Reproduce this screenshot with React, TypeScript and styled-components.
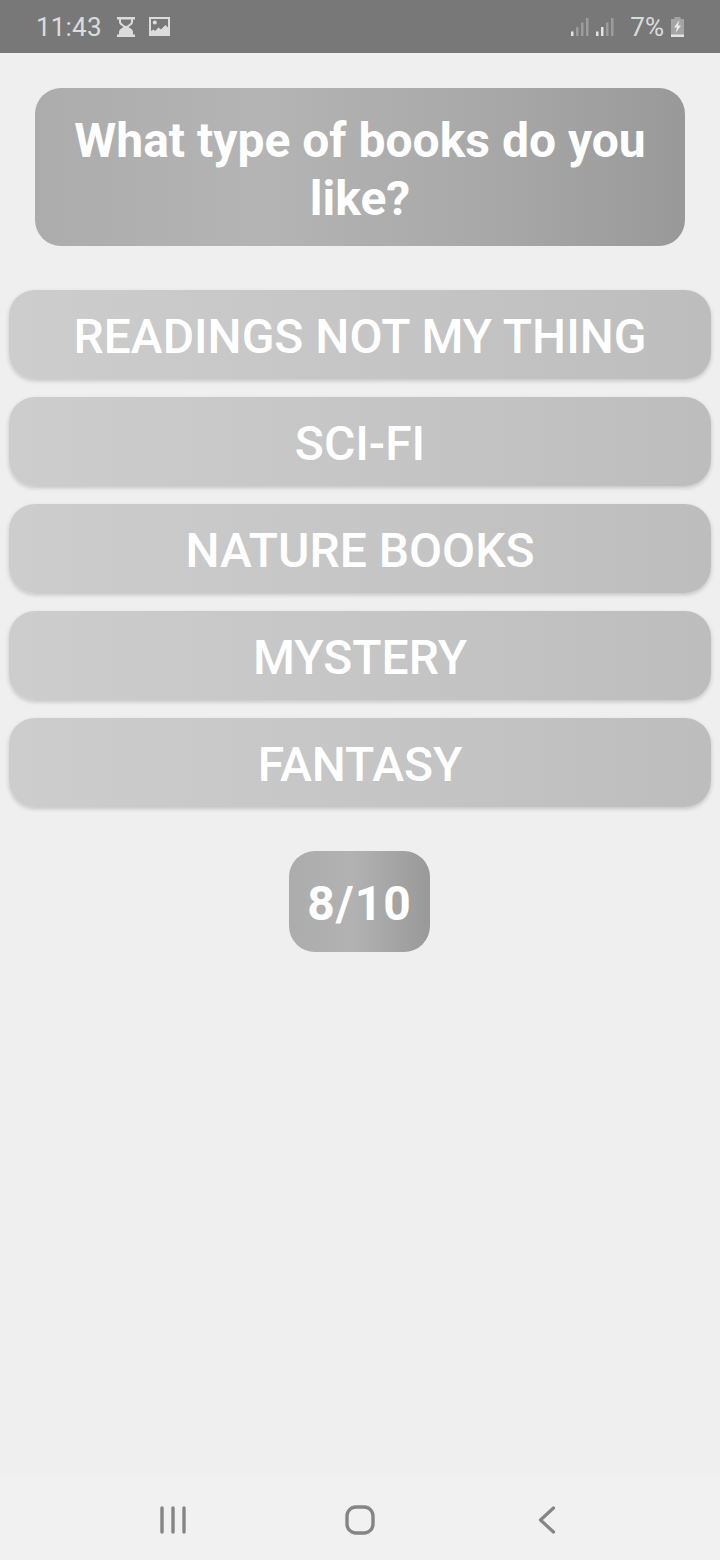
import React from 'react';
import styled, { createGlobalStyle } from 'styled-components';

const GlobalStyle = createGlobalStyle`
  html, body {
    margin: 0;
    padding: 0;
    background: #efefef;
  }
  * {
    box-sizing: border-box;
  }
`;

const Screen = styled.div`
  width: 720px;
  height: 1560px;
  display: flex;
  flex-direction: column;
  background: #efefef;
  font-family: Roboto, sans-serif;
  overflow: hidden;
`;

const StatusBar = styled.div`
  height: 53px;
  flex: none;
  background: #787878;
  color: #dcdcdc;
  display: flex;
  align-items: center;
  justify-content: space-between;
  padding: 0 35px 0 36px;
`;

const StatusGroup = styled.div`
  display: flex;
  align-items: center;
`;

const Clock = styled.span`
  font-size: 26px;
  letter-spacing: 0.2px;
  margin-right: 15px;
`;

const Percent = styled.span`
  font-size: 26px;
  margin: 0 6px 0 16px;
`;

const Icon = styled.svg<{ $gap?: number }>`
  display: block;
  flex: none;
  margin-right: ${(props) => props.$gap ?? 0}px;
`;

const Content = styled.main`
  flex: 1;
  display: flex;
  flex-direction: column;
  align-items: center;
  padding-top: 35px;
`;

const Question = styled.h1`
  width: 650px;
  height: 158px;
  margin: 0 0 44px;
  padding: 5px 30px 0;
  display: flex;
  align-items: center;
  justify-content: center;
  text-align: center;
  border-radius: 26px;
  background: linear-gradient(90deg, #acacac 0%, #b4b4b4 35%, #a8a8a8 70%, #999999 100%);
  color: #ffffff;
  font-size: 48px;
  font-weight: 700;
  line-height: 58px;
`;

const Options = styled.div`
  width: 702px;
  display: flex;
  flex-direction: column;
  gap: 18px;
`;

const Option = styled.button`
  height: 89px;
  padding: 4px 0 0;
  border: none;
  border-radius: 26px;
  background: linear-gradient(90deg, #cdcdcd 0%, #c4c4c4 60%, #bdbdbd 100%);
  box-shadow: 0 2px 4px rgba(0, 0, 0, 0.18);
  color: #ffffff;
  font-family: inherit;
  font-size: 48px;
  font-weight: 500;
  line-height: 85px;
  text-align: center;
`;

const Counter = styled.div`
  width: 141px;
  height: 101px;
  margin: 44px 1px 0 0;
  padding-top: 4px;
  display: flex;
  align-items: center;
  justify-content: center;
  border-radius: 26px;
  background: linear-gradient(90deg, #acacac 0%, #b2b2b2 45%, #999999 100%);
  color: #ffffff;
  font-size: 48px;
  font-weight: 700;
  letter-spacing: 1px;
`;

const NavBar = styled.nav`
  height: 83px;
  flex: none;
  background: #f1f1f1;
  display: flex;
  align-items: center;
  justify-content: center;
  color: #858585;
`;

const NavSlot = styled.div`
  width: 187px;
  display: flex;
  justify-content: center;
  padding-top: 3px;
`;

const options = ['READINGS NOT MY THING', 'SCI-FI', 'NATURE BOOKS', 'MYSTERY', 'FANTASY'];

const Hourglass = () => (
  <Icon $gap={14} width="18" height="20" viewBox="0 0 18 20">
    <path d="M0 0h18v2.500h-2v2.500c0 2-2 3.500-4.500 5 2.500 1.500 4.500 3 4.500 5v2.500h2V20H0v-2.500h2V15c0-2 2-3.500 4.500-5C4 8.500 2 7 2 5V2.500H0z" fill="#dcdcdc" />
    <path d="M4 2.500h10V5c0 1.200-2.500 3-5 4.300C6.500 8 4 6.200 4 5z" fill="#787878" />
  </Icon>
);

const Picture = () => (
  <Icon width="21" height="19" viewBox="0 0 21 19">
    <path d="M0 0h21v19H0z" fill="#dcdcdc" />
    <path d="M2 2h17v8.500l-2.500-2.500-4.500 4.500-2.500-2-3.500 3.500-1.500-1.500L2 14z" fill="#787878" />
    <circle cx="5.800" cy="5.500" r="2" fill="#dcdcdc" />
  </Icon>
);

const Signal = ({ strong, gap }: { strong: number; gap: number }) => (
  <Icon $gap={gap} width="18" height="22" viewBox="0 0 18 22">
    {[0, 1, 2, 3].map((i) => (
      <rect
        key={i}
        x={i * 5}
        y={20 - (i + 1) * 4.500}
        width="2.500"
        height={(i + 1) * 4.500}
        fill={i < strong ? '#e4e4e4' : '#9c9c9c'}
      />
    ))}
  </Icon>
);

const Battery = () => (
  <Icon width="15" height="22" viewBox="0 0 15 22">
    <path d="M4.500 1h6v2h3.500v18H1V3h3.500z" fill="#a4a4a4" />
    <path d="M1 18.500h13V21H1z" fill="#e4e4e4" />
    <path d="M9.500 4 4 11.500h3L5.500 17 11 9.500H8z" fill="#ececec" />
  </Icon>
);

export default function App() {
  return (
    <>
      <GlobalStyle />
      <Screen>
        <StatusBar>
          <StatusGroup>
            <Clock>11:43</Clock>
            <Hourglass />
            <Picture />
          </StatusGroup>
          <StatusGroup>
            <Signal strong={1} gap={7} />
            <Signal strong={2} gap={0} />
            <Percent>7%</Percent>
            <Battery />
          </StatusGroup>
        </StatusBar>
        <Content>
          <Question>What type of books do you like?</Question>
          <Options>
            {options.map((label) => (
              <Option key={label}>{label}</Option>
            ))}
          </Options>
          <Counter>8/10</Counter>
        </Content>
        <NavBar>
          <NavSlot>
            <Icon width="28" height="28" viewBox="0 0 28 28" fill="none" stroke="currentColor" strokeWidth="3.400" strokeLinecap="round">
              <path d="M3 2v24M14 2v24M25 2v24" />
            </Icon>
          </NavSlot>
          <NavSlot>
            <Icon width="30" height="30" viewBox="0 0 30 30" fill="none" stroke="currentColor" strokeWidth="3.400">
              <rect x="2" y="2" width="26" height="26" rx="9" />
            </Icon>
          </NavSlot>
          <NavSlot>
            <Icon width="18" height="28" viewBox="0 0 18 28" fill="none" stroke="currentColor" strokeWidth="3.200" strokeLinecap="round" strokeLinejoin="round">
              <path d="M15.500 2 2.500 14l13 12" />
            </Icon>
          </NavSlot>
        </NavBar>
      </Screen>
    </>
  );
}
